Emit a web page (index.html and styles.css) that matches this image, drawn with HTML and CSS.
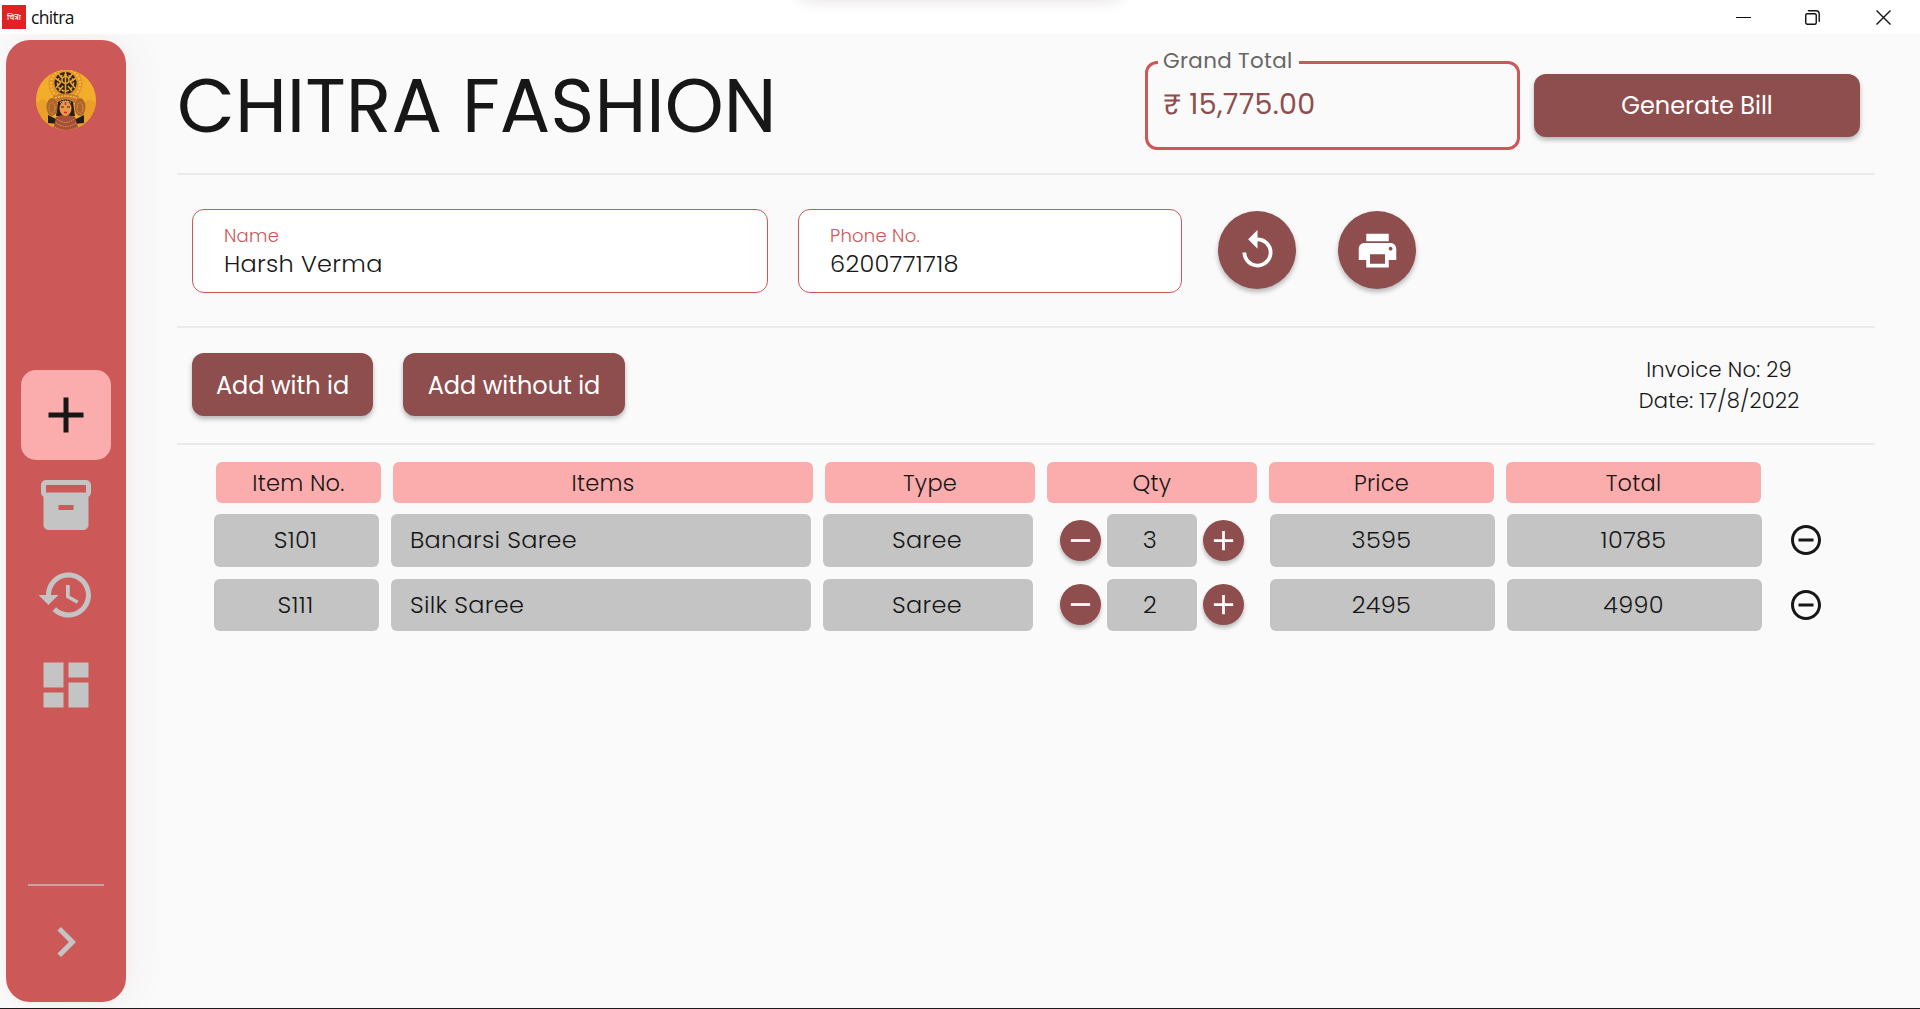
FILE: index.html
```html
<!DOCTYPE html>
<html lang="en">
<head>
<meta charset="utf-8">
<title>chitra</title>
<link rel="stylesheet" href="styles.css">
</head>
<body>
<svg width="0" height="0" class="defs" aria-hidden="true">
  <symbol id="plus" viewBox="0 0 24 24"><path d="M19 13h-6v6h-2v-6H5v-2h6V5h2v6h6v2z"/></symbol>
  <symbol id="minus" viewBox="0 0 24 24"><path d="M19 13H5v-2h14v2z"/></symbol>
  <symbol id="remove" viewBox="0 0 24 24"><path d="M7 11v2h10v-2H7zm5-9C6.48 2 2 6.48 2 12s4.48 10 10 10 10-4.480 10-10S17.520 2 12 2zm0 18c-4.410 0-8-3.590-8-8s3.590-8 8-8 8 3.590 8 8-3.590 8-8 8z"/></symbol>
</svg>

<header class="titlebar">
  <span class="app-icon" lang="hi">चित्रा</span>
  <span class="app-name">chitra</span>
  <div class="window-controls">
    <svg width="15" height="15" viewBox="0 0 15 15"><path d="M0 7.500h15"/></svg>
    <svg width="15" height="15" viewBox="0 0 15 15"><rect x=".75" y="3.750" width="10.500" height="10.500" rx="1.500"/><path d="M3.500 1.200V.7h7.500a3.200 3.200 0 0 1 3.200 3.200v7.300h-.5"/></svg>
    <svg width="15" height="15" viewBox="0 0 15 15"><path d="M.5.5l14 14M14.500.5l-14 14"/></svg>
  </div>
</header>

<div class="app">
  <aside class="sidebar">
    <svg class="avatar" viewBox="0 0 60 60">
      <defs><clipPath id="round"><circle cx="30" cy="30" r="30"/></clipPath></defs>
      <g clip-path="url(#round)">
        <rect width="60" height="60" fill="#f2ae2b"/>
        <path d="M0 34q8-9 12 0t6 26H0zM60 34q-8-9-12 0t-6 26h18z" fill="#e99f2a"/>
        <circle cx="29.500" cy="14" r="17" fill="#e39429"/>
        <circle cx="29.500" cy="14" r="14.500" fill="none" stroke="#f7c03c" stroke-width="2" stroke-dasharray="2 1.500"/>
        <circle cx="29.500" cy="13" r="11" fill="#2b211d"/>
        <g fill="none" stroke="#eaa42f" stroke-width="1.600">
          <circle cx="29.500" cy="10" r="3.500"/><circle cx="29.500" cy="13" r="8" stroke-dasharray="3 1.500"/>
          <path d="M29.500 2v22M19 8l6 4-5 6M40 8l-6 4 5 6M22 3l4 5M37 3l-4 5M23 21l4-5M36 21l-4-5"/>
        </g>
        <path d="M17 26q13-5 26 0l-2 7H19z" fill="#c9782b"/>
        <path d="M19 28q11-4 22 0" fill="none" stroke="#f5c052" stroke-width="1.500" stroke-dasharray="2 1"/>
        <path d="M22 32q8-5 15 0l2 14H20z" fill="#291c1c"/>
        <ellipse cx="16" cy="37" rx="5.500" ry="9" fill="#ad652b"/><ellipse cx="44" cy="37" rx="5.500" ry="9" fill="#ad652b"/>
        <ellipse cx="16" cy="38" rx="3" ry="5.500" fill="none" stroke="#dfa042" stroke-dasharray="1.500 1"/><ellipse cx="44" cy="38" rx="3" ry="5.500" fill="none" stroke="#dfa042" stroke-dasharray="1.500 1"/>
        <path d="M12 45l8 4 3-3-1 8-10-1zM48 45l-8 4-3-3 1 8 10-1z" fill="#1f1c20"/>
        <path d="M20 47q9-4 19 0l4 13H17z" fill="#a64f39"/>
        <path d="M21 49q9 7 17 0M20 53q10 7 20 0M19 57q11 7 22 0" fill="none" stroke="#d99b5c" stroke-dasharray="1.500 1"/>
        <ellipse cx="29.500" cy="38.500" rx="6" ry="7.500" fill="#ee9748"/>
        <path d="M25 37h3M31 37h3" stroke="#33201b" stroke-width="1.200"/>
        <path d="M29.500 32v3M28 42.500h3" stroke="#c52f31" stroke-width="1.500"/>
        <path d="M24 32.500q5.500-3 11 0" fill="none" stroke="#fff0cc" stroke-dasharray="1.500 1"/>
      </g>
    </svg>
    <nav class="nav">
      <a class="nav-item active"><svg viewBox="0 0 24 24"><use href="#plus"/></svg></a>
      <a class="nav-item"><svg viewBox="0 0 24 24"><path fill-rule="evenodd" d="M20 2H4c-1 0-2 .9-2 2v3.010c0 .72.430 1.340 1 1.690V20c0 1.100 1.100 2 2 2h14c.9 0 2-.9 2-2V8.700c.570-.35 1-.970 1-1.690V4c0-1.100-1-2-2-2zm-5 12H9v-2h6v2zm5-7H4V4h16v3z"/></svg></a>
      <a class="nav-item"><svg viewBox="0 0 24 24"><path d="M13 3c-4.970 0-9 4.030-9 9H1l3.890 3.890.070.140L9 12H6c0-3.870 3.130-7 7-7s7 3.130 7 7-3.130 7-7 7c-1.930 0-3.680-.790-4.940-2.060l-1.420 1.420C8.270 19.990 10.510 21 13 21c4.970 0 9-4.030 9-9s-4.030-9-9-9zm-1 5v5l4.280 2.540.720-1.210-3.500-2.080V8H12z"/></svg></a>
      <a class="nav-item"><svg viewBox="0 0 24 24"><path d="M3 13h8V3H3v10zm0 8h8v-6H3v6zm10 0h8V11h-8v10zm0-18v6h8V3h-8z"/></svg></a>
    </nav>
    <div class="sidebar-foot">
      <svg viewBox="0 0 24 24"><path d="M10 6L8.590 7.410 13.170 12l-4.580 4.590L10 18l6-6z"/></svg>
    </div>
  </aside>

  <main class="main">
    <section class="band heading">
      <h1>CHITRA FASHION</h1>
      <div class="grand-total"><span class="grand-label">Grand Total</span><span class="grand-value">₹ 15,775.00</span></div>
      <button class="btn generate">Generate Bill</button>
    </section>

    <section class="band customer">
      <div class="field name"><label>Name</label><span>Harsh Verma</span></div>
      <div class="field phone"><label>Phone No.</label><span>6200771718</span></div>
      <button class="round reset"><svg viewBox="0 0 24 24"><path d="M12 5V1L7 6l5 5V7c3.310 0 6 2.690 6 6s-2.690 6-6 6-6-2.690-6-6H4c0 4.420 3.580 8 8 8s8-3.580 8-8-3.580-8-8-8z"/></svg></button>
      <button class="round print"><svg viewBox="0 0 24 24"><path d="M19 8H5c-1.660 0-3 1.340-3 3v6h4v4h12v-4h4v-6c0-1.660-1.340-3-3-3zm-3 11H8v-5h8v5zm3-7c-.550 0-1-.450-1-1s.450-1 1-1 1 .450 1 1-.450 1-1 1zm-1-9H6v4h12V3z"/></svg></button>
    </section>

    <section class="band actions">
      <button class="btn with-id">Add with id</button>
      <button class="btn without-id">Add without id</button>
      <p class="invoice">Invoice No: 29<br>Date: 17/8/2022</p>
    </section>

    <section class="items">
      <div class="row head">
        <div>Item No.</div><div>Items</div><div>Type</div><div>Qty</div><div>Price</div><div>Total</div>
      </div>
      <div class="row">
        <div class="cell">S101</div>
        <div class="cell left">Banarsi Saree</div>
        <div class="cell">Saree</div>
        <div class="qty"><button class="step"><svg><use href="#minus"/></svg></button><div class="cell">3</div><button class="step"><svg><use href="#plus"/></svg></button></div>
        <div class="cell">3595</div>
        <div class="cell">10785</div>
        <svg class="delete"><use href="#remove"/></svg>
      </div>
      <div class="row">
        <div class="cell">S111</div>
        <div class="cell left">Silk Saree</div>
        <div class="cell">Saree</div>
        <div class="qty"><button class="step"><svg><use href="#minus"/></svg></button><div class="cell">2</div><button class="step"><svg><use href="#plus"/></svg></button></div>
        <div class="cell">2495</div>
        <div class="cell">4990</div>
        <svg class="delete"><use href="#remove"/></svg>
      </div>
    </section>
  </main>
</div>
</body>
</html>
```

FILE: styles.css
```css
* { box-sizing: border-box; }

body {
  margin: 0;
  height: 1009px;
  display: flex;
  flex-direction: column;
  overflow: hidden;
  background: #fafafa;
  border-bottom: 1px solid #1c1a1c;
  color: #171717;
  font-family: Poppins, Inter, "Noto Sans", sans-serif;
  font-weight: 300;
}

button { border: 0; padding: 0; font: inherit; color: #fff; }
.defs { position: absolute; }

/* Window title bar */
.titlebar {
  position: relative;
  z-index: 1;
  flex: none;
  height: 34px;
  padding: 0 29px 0 2px;
  display: flex;
  align-items: center;
  background: #fff;
  overflow: hidden;
}
.titlebar::before {
  content: "";
  position: absolute;
  left: 799px;
  top: -20px;
  width: 322px;
  height: 20px;
  border-radius: 10px;
  box-shadow: 0 0 16px rgba(60, 20, 30, .14);
}
.app-icon {
  width: 24px;
  height: 24px;
  display: flex;
  align-items: center;
  justify-content: center;
  background: #e02224;
  color: #fff;
  font: 500 8px/24px "Noto Sans", sans-serif;
}
.app-name {
  margin-left: 5px;
  color: #111;
  font: 400 17.5px/24px "Open Sans", sans-serif;
  letter-spacing: -.65px;
}
.window-controls { margin-left: auto; display: flex; gap: 54px; }
.window-controls svg { fill: none; stroke: #111; stroke-width: 1.4; }
.window-controls svg:first-child { stroke-width: 1; }
.window-controls svg:nth-child(2) { margin-right: 2px; }

.app { flex: 1; display: flex; min-height: 0; }

/* Sidebar */
.sidebar {
  width: 120px;
  height: 962px;
  margin: 6px 0 0 6px;
  padding: 30px 0;
  display: flex;
  flex-direction: column;
  align-items: center;
  border-radius: 24px;
  background: #cd5858;
  box-shadow: 8px 0 36px rgba(150, 90, 80, .06), 0 0 14px rgba(150, 90, 80, .04);
}
.sidebar svg { display: block; width: 60px; height: 60px; fill: #c4c4c4; }
.nav { margin-top: 240px; }
.nav-item {
  width: 90px;
  height: 90px;
  display: flex;
  align-items: center;
  justify-content: center;
  border-radius: 15px;
}
.nav-item.active { background: #fbacac; }
.nav-item.active svg { fill: #171717; }
.sidebar-foot {
  width: 76px;
  margin-top: auto;
  padding: 26px 8px 0;
  border-top: 2px solid #c8a2a2;
}

/* Page bands */
.main { width: 1698px; margin-left: 51px; }
.band { display: flex; align-items: center; border-bottom: 2px solid #ebebeb; }
.btn {
  height: 63px;
  padding-top: 2px;
  border-radius: 12px;
  background: #8e4e4e;
  box-shadow: 0 3px 5px rgba(0, 0, 0, .28);
  font-size: 24px;
  font-weight: 400;
}

.heading { height: 141px; padding: 3px 15px 0 0; }
h1 {
  margin: 0 auto 0 0;
  font-size: 75px;
  font-weight: 400;
  line-height: 1;
}
.grand-total {
  position: relative;
  width: 375px;
  height: 89px;
  margin-right: 14px;
  padding: 0 0 2px 15px;
  display: flex;
  align-items: center;
  border: 3px solid #cd5858;
  border-radius: 12px;
}
.grand-label {
  position: absolute;
  left: 10px;
  top: -16px;
  padding: 0 6px 0 5px;
  background: #fafafa;
  color: #666;
  font-size: 21.4px;
  font-weight: 400;
  line-height: 26px;
  letter-spacing: .35px;
}
.grand-value { color: #8e4e4e; font-size: 28.5px; font-weight: 400; letter-spacing: .3px; }
.generate { width: 326px; padding-top: 1px; }

.customer { height: 153px; padding: 0 0 1px 15px; }
.field {
  height: 84px;
  margin-top: 1px;
  padding: 12.5px 0 0 31px;
  border: 1.5px solid #cd5858;
  border-radius: 12px;
  background: #fff;
  line-height: 28px;
}
.field label { display: block; color: #cd5858; font-size: 18px; letter-spacing: .25px; }
.field span { display: block; font-size: 24px; letter-spacing: .3px; }
.name { width: 576px; margin-right: 30px; }
.phone { width: 384px; margin-right: 36px; }
.round {
  width: 78px;
  height: 78px;
  margin-right: 42px;
  display: grid;
  place-items: center;
  border-radius: 50%;
  background: #8e4e4e;
  box-shadow: 0 3px 5px rgba(0, 0, 0, .28);
}
.round svg { width: 45px; height: 45px; fill: #fff; }

.actions { height: 117px; padding: 0 75.5px 2px 15px; }
.with-id { width: 181px; margin-right: 30px; }
.without-id { width: 222px; }
.invoice {
  margin: 1px 0 0 auto;
  font-size: 21px;
  line-height: 31px;
  letter-spacing: .25px;
  text-align: center;
}

/* Bill items */
.items { padding: 17px 0 0 37px; }
.row {
  display: grid;
  grid-template-columns: 165px 420px 210px 213px 225px 255px 36px;
  column-gap: 12px;
  align-items: center;
  height: 52.5px;
  margin-bottom: 12px;
}
.row.head {
  grid-template-columns: 165px 420px 210px 210px 225px 255px;
  height: 41px;
  margin: 0 0 11px 2px;
}
.row.head > div {
  height: 41px;
  padding-top: 1px;
  border-radius: 6px;
  background: #fbacac;
  font-size: 22.5px;
  line-height: 41px;
  letter-spacing: .25px;
  text-align: center;
}
.cell {
  height: 52.5px;
  padding-right: 2px;
  border-radius: 6px;
  background: #c4c4c4;
  font-size: 24px;
  line-height: 52px;
  letter-spacing: .28px;
  text-align: center;
}
.cell.left { padding-left: 19px; text-align: left; }
.qty { display: flex; align-items: center; justify-content: center; gap: 6px; }
.qty .cell { width: 90px; padding-right: 3px; }
.step {
  width: 41px;
  height: 41px;
  display: grid;
  place-items: center;
  border-radius: 50%;
  background: #8e4e4e;
  box-shadow: 0 3px 4px rgba(0, 0, 0, .26);
}
.step svg { width: 33px; height: 33px; fill: #fff; }
.delete { width: 36px; height: 36px; margin-left: 14px; fill: #171717; }
```
